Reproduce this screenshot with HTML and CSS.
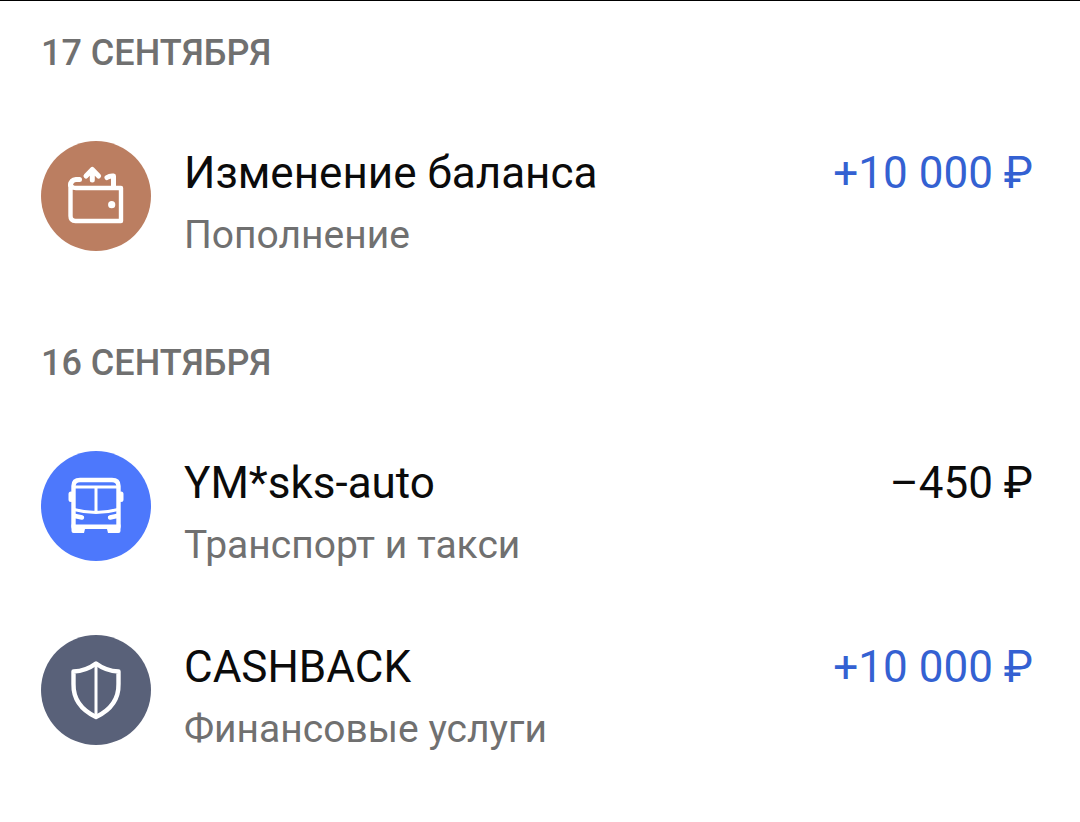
FILE: index.html
```html
<!DOCTYPE html>
<html lang="ru">

<head>
    <meta charset="UTF-8">
    <meta name="viewport" content="width=device-width, initial-scale=1.0">
    <title>История операций</title>
    <link rel="stylesheet" href="styles.css">
</head>

<body>

    <main class="history">
        <section class="history__day">
            <h2 class="history__date">17 СЕНТЯБРЯ</h2>
            <ul class="history__list">
                <li class="operation">
                    <svg class="operation__icon operation__icon--wallet" viewBox="0 0 110 110" aria-hidden="true">
                        <path d="M29.500 43V75Q29.500 80 34.500 80H80V47H35Q30 47 29.500 43" />
                        <path class="operation__bold" d="M29.500 44Q30 39 35 38.500H38.500" />
                        <path class="operation__bold" d="M66 36.500Q69 34.500 72.500 35V46" />
                        <path class="operation__bold" d="M51.300 39V28.500M45 35L51.300 28.500L57.600 35" />
                        <circle class="operation__dot" cx="70.700" cy="63.700" r="3.600" />
                    </svg>
                    <div class="operation__info">
                        <h3 class="operation__title">Изменение баланса</h3>
                        <p class="operation__category">Пополнение</p>
                    </div>
                    <span class="operation__sum operation__sum--income">+10 000 ₽</span>
                </li>
            </ul>
        </section>

        <section class="history__day">
            <h2 class="history__date">16 СЕНТЯБРЯ</h2>
            <ul class="history__list">
                <li class="operation">
                    <svg class="operation__icon operation__icon--bus" viewBox="0 0 110 110" aria-hidden="true">
                        <path d="M32.500 76V35Q32.500 29 39 29H71Q77.500 29 77.500 35V76" />
                        <path class="operation__thin" d="M33 36H77M55 37V60M33 58.500Q44 61.500 55 61.500T77 58.500" />
                        <path d="M34 65L41 66.500M76 65L69 66.500" />
                        <path class="operation__bold" d="M30 43V48.500M80 43V48.500" />
                        <path class="operation__fill" d="M30.500 73.500H79.500V80Q79.500 82 77.500 82H67L66 78H44L43 82H32.500Q30.500 82 30.500 80Z" />
                    </svg>
                    <div class="operation__info">
                        <h3 class="operation__title">YM*sks-auto</h3>
                        <p class="operation__category">Транспорт и такси</p>
                    </div>
                    <span class="operation__sum">–450 ₽</span>
                </li>
                <li class="operation">
                    <svg class="operation__icon operation__icon--shield" viewBox="0 0 110 110" aria-hidden="true">
                        <path d="M55 28.500Q45 36 32.500 36.500V49Q32 71 55 82Q78 71 77.500 49V36.500Q65 36 55 28.500Z" />
                        <path class="operation__thin" d="M55 29V81" />
                    </svg>
                    <div class="operation__info">
                        <h3 class="operation__title">CASHBACK</h3>
                        <p class="operation__category">Финансовые услуги</p>
                    </div>
                    <span class="operation__sum operation__sum--income">+10 000 ₽</span>
                </li>
            </ul>
        </section>
    </main>

</body>

</html>
```
FILE: styles.css
```css
body{
    margin: 0;
    background-color: #fff;
    color: #0b0b0b;
    font-family: Roboto, Arial, sans-serif;
}

.history{
    border-top: 1px solid #000;
    padding: 0 47px 0 41px;
}

.history__day + .history__day{
    margin-top: 21px;
}

.history__date{
    margin: 0;
    font-size: 36px;
    font-weight: 500;
    line-height: 105px;
    color: #707070;
}

.history__list{
    margin: 0;
    padding: 0;
    list-style: none;
}

.operation{
    display: flex;
    align-items: flex-start;
    padding: 35px 0 25px;
}

.operation__icon{
    flex: none;
    width: 110px;
    height: 110px;
    margin-right: 33px;
    border-radius: 50%;
    fill: none;
    stroke: #fff;
    stroke-width: 4.4;
    stroke-linecap: round;
    stroke-linejoin: round;
}

.operation__icon--wallet{
    background-color: #bb7e61;
}

.operation__icon--bus{
    background-color: #4d78fc;
}

.operation__icon--shield{
    background-color: #596179;
}

.operation__thin{
    stroke-width: 3;
}

.operation__bold{
    stroke-width: 5;
}

.operation__dot,
.operation__fill{
    fill: #fff;
    stroke: none;
}

.operation__info{
    flex: 1;
}

.operation__title,
.operation__sum{
    margin: 0;
    font-size: 44px;
    font-weight: 400;
    line-height: 64px;
}

.operation__category{
    margin: 0;
    font-size: 39px;
    line-height: 60px;
    color: #707070;
}

.operation__sum{
    white-space: nowrap;
}

.operation__sum--income{
    color: #3461d2;
}
```
